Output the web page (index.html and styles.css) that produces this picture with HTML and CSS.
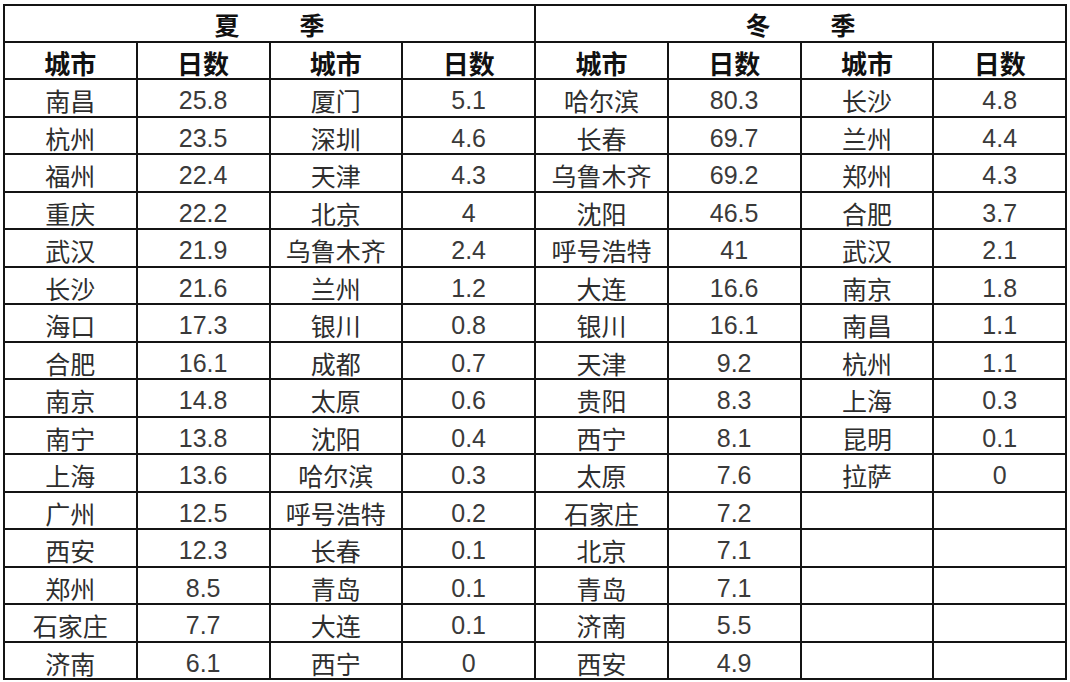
FILE: index.html
```html
<!DOCTYPE html>
<html lang="zh">
<head>
<meta charset="utf-8">
<title>城市日数</title>
<link rel="stylesheet" href="styles.css">
</head>
<body>
<table class="grid">
<colgroup><col><col><col><col><col><col><col><col></colgroup>
<thead>
<tr class="season"><th colspan="4"><span class="sw"><span>夏</span><span>季</span></span></th><th colspan="4"><span class="sw"><span>冬</span><span>季</span></span></th></tr>
<tr class="head"><th>城市</th><th>日数</th><th>城市</th><th>日数</th><th>城市</th><th>日数</th><th>城市</th><th>日数</th></tr>
</thead>
<tbody>
<tr><td>南昌</td><td class="n">25.8</td><td>厦门</td><td class="n">5.1</td><td>哈尔滨</td><td class="n">80.3</td><td>长沙</td><td class="n">4.8</td></tr>
<tr><td>杭州</td><td class="n">23.5</td><td>深圳</td><td class="n">4.6</td><td>长春</td><td class="n">69.7</td><td>兰州</td><td class="n">4.4</td></tr>
<tr><td>福州</td><td class="n">22.4</td><td>天津</td><td class="n">4.3</td><td>乌鲁木齐</td><td class="n">69.2</td><td>郑州</td><td class="n">4.3</td></tr>
<tr><td>重庆</td><td class="n">22.2</td><td>北京</td><td class="n">4</td><td>沈阳</td><td class="n">46.5</td><td>合肥</td><td class="n">3.7</td></tr>
<tr><td>武汉</td><td class="n">21.9</td><td>乌鲁木齐</td><td class="n">2.4</td><td>呼号浩特</td><td class="n">41</td><td>武汉</td><td class="n">2.1</td></tr>
<tr><td>长沙</td><td class="n">21.6</td><td>兰州</td><td class="n">1.2</td><td>大连</td><td class="n">16.6</td><td>南京</td><td class="n">1.8</td></tr>
<tr><td>海口</td><td class="n">17.3</td><td>银川</td><td class="n">0.8</td><td>银川</td><td class="n">16.1</td><td>南昌</td><td class="n">1.1</td></tr>
<tr><td>合肥</td><td class="n">16.1</td><td>成都</td><td class="n">0.7</td><td>天津</td><td class="n">9.2</td><td>杭州</td><td class="n">1.1</td></tr>
<tr><td>南京</td><td class="n">14.8</td><td>太原</td><td class="n">0.6</td><td>贵阳</td><td class="n">8.3</td><td>上海</td><td class="n">0.3</td></tr>
<tr><td>南宁</td><td class="n">13.8</td><td>沈阳</td><td class="n">0.4</td><td>西宁</td><td class="n">8.1</td><td>昆明</td><td class="n">0.1</td></tr>
<tr><td>上海</td><td class="n">13.6</td><td>哈尔滨</td><td class="n">0.3</td><td>太原</td><td class="n">7.6</td><td>拉萨</td><td class="n">0</td></tr>
<tr><td>广州</td><td class="n">12.5</td><td>呼号浩特</td><td class="n">0.2</td><td>石家庄</td><td class="n">7.2</td><td></td><td></td></tr>
<tr><td>西安</td><td class="n">12.3</td><td>长春</td><td class="n">0.1</td><td>北京</td><td class="n">7.1</td><td></td><td></td></tr>
<tr><td>郑州</td><td class="n">8.5</td><td>青岛</td><td class="n">0.1</td><td>青岛</td><td class="n">7.1</td><td></td><td></td></tr>
<tr><td>石家庄</td><td class="n">7.7</td><td>大连</td><td class="n">0.1</td><td>济南</td><td class="n">5.5</td><td></td><td></td></tr>
<tr><td>济南</td><td class="n">6.1</td><td>西宁</td><td class="n">0</td><td>西安</td><td class="n">4.9</td><td></td><td></td></tr>
</tbody>
</table>
</body>
</html>
```
FILE: styles.css
```css
html, body {
  margin: 0;
  padding: 0;
  background: #ffffff;
}
body {
  padding: 4px 0 0 3px;
  font-family: "Liberation Sans", "Noto Sans CJK SC", sans-serif;
  color: #333333;
}
.grid {
  border-collapse: collapse;
  table-layout: fixed;
  width: 1062px;
}
.grid col {
  width: 132.75px;
}
.grid th,
.grid td {
  border: 2px solid #141414;
  padding: 0;
  text-align: center;
  vertical-align: middle;
  line-height: 1;
  white-space: nowrap;
}
.grid th {
  font-family: "Noto Sans CJK SC", sans-serif;
  font-weight: 700;
  color: #111111;
  font-size: 26px;
  height: 30px;
  padding-top: 5px;
}
.grid .season th {
  font-size: 25px;
  height: 33px;
  padding-top: 2px;
}
.grid td {
  font-family: "Noto Sans CJK SC", sans-serif;
  font-weight: 400;
  font-size: 25px;
  color: #2e2e2e;
  height: 29.5px;
  padding-top: 6px;
}
.grid td.n {
  font-family: "Liberation Sans", sans-serif;
  color: #3a3a3a;
}
.sw {
  display: inline-flex;
  gap: 60px;
}
```
